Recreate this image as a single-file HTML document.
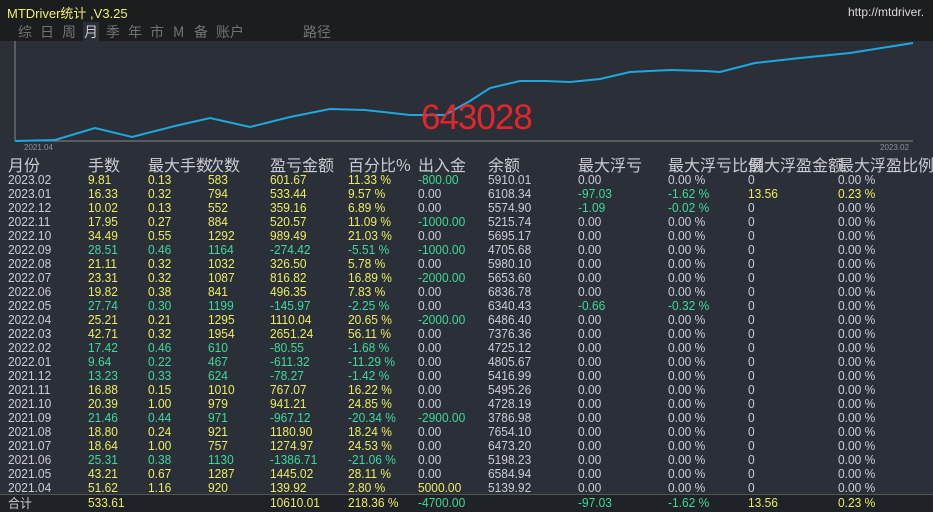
<!DOCTYPE html>
<html><head><meta charset="utf-8"><style>
*{margin:0;padding:0;box-sizing:border-box}
body{width:933px;height:512px;overflow:hidden;background:#2b3038;font-family:"Liberation Sans","Noto Sans CJK SC",sans-serif;position:relative}
#top{position:absolute;left:0;top:0;width:933px;height:41px;background:#1c1d1f}
#title{position:absolute;left:7px;top:3px;color:#f0f070;font-size:13px}
#url{position:absolute;left:848px;top:5px;color:#d8d8d8;font-size:12px}
#menu span{position:absolute;top:22px;color:#707478;font-size:14px;font-family:"Noto Sans CJK SC",sans-serif}
#chart{position:absolute;left:0;top:41px}
#red{position:absolute;left:421px;top:98px;color:#e4262a;font-size:35px;letter-spacing:-1px}
.ax{position:absolute;top:143px;font-size:8px;color:#8c9096}
table{position:absolute;left:8px;top:155px;border-collapse:collapse;font-size:13px;color:#c9cdd2;table-layout:fixed;width:925px}
td{height:14px;line-height:14px;padding:0;white-space:nowrap;overflow:visible;transform:scaleX(.92);transform-origin:left}
tr.h td{font-size:16px;height:18px;line-height:18px;font-family:"Noto Sans CJK SC",sans-serif;transform:none}
.y td:nth-child(-n+6){color:#ecec64}
.g td:nth-child(-n+6){color:#3fd99a}
.y td:first-child,.g td:first-child{color:#c9cdd2}
td.y{color:#ecec64!important}td.g{color:#3fd99a!important}td.w{color:#c9cdd2!important}
#tot{position:absolute;left:0;top:494px;width:933px;height:18px;background:#1f2226;border-top:1px solid #555}
</style></head><body>
<div id="top"></div>
<div id="title">MTDriver统计 ,V3.25</div>
<div id="url">http://mtdriver.</div>
<div id="menu"><span style="left:18px">综</span><span style="left:40px">日</span><span style="left:62px">周</span><span style="left:83px;color:#c8ccd0;background:#2b3038;padding:0 1px">月</span><span style="left:106px">季</span><span style="left:128px">年</span><span style="left:150px">市</span><span style="left:173px">M</span><span style="left:194px">备</span><span style="left:216px">账户</span><span style="left:303px">路径</span></div>
<svg id="chart" width="933" height="105">
<line x1="15" y1="0" x2="15" y2="100" stroke="#888" stroke-width="1"/>
<line x1="15" y1="100" x2="913" y2="100" stroke="#888" stroke-width="1"/>
<polyline fill="none" stroke="#1ea8e0" stroke-width="2" points="15,100 55,99 95,87 132,96 175,85 210,77 250,86 290,76 330,68 365,69 410,74 445,74 470,60 490,47 520,40 545,40 570,41 600,38 630,31 670,29 705,30 720,31 755,22 800,17 850,12 913,2"/>
</svg>
<div class="ax" style="left:24px">2021.04</div>
<div class="ax" style="left:880px">2023.02</div>
<div id="red">643028</div>
<div id="tot"></div>
<table>
<colgroup><col style="width:80px"><col style="width:60px"><col style="width:60px"><col style="width:62px"><col style="width:78px"><col style="width:70px"><col style="width:70px"><col style="width:90px"><col style="width:90px"><col style="width:80px"><col style="width:90px"><col style="width:95px"></colgroup>
<tr class="h"><td>月份</td><td>手数</td><td>最大手数</td><td>次数</td><td>盈亏金额</td><td>百分比%</td><td>出入金</td><td>余额</td><td>最大浮亏</td><td>最大浮亏比例</td><td>最大浮盈金额</td><td>最大浮盈比例</td></tr>
<tr class="y"><td>2023.02</td><td>9.81</td><td>0.13</td><td>583</td><td>601.67</td><td>11.33 %</td><td class="g">-800.00</td><td>5910.01</td><td>0.00</td><td>0.00 %</td><td>0</td><td>0.00 %</td></tr>
<tr class="y"><td>2023.01</td><td>16.33</td><td>0.32</td><td>794</td><td>533.44</td><td>9.57 %</td><td class="w">0.00</td><td>6108.34</td><td class="g">-97.03</td><td class="g">-1.62 %</td><td class="y">13.56</td><td class="y">0.23 %</td></tr>
<tr class="y"><td>2022.12</td><td>10.02</td><td>0.13</td><td>552</td><td>359.16</td><td>6.89 %</td><td class="w">0.00</td><td>5574.90</td><td class="g">-1.09</td><td class="g">-0.02 %</td><td>0</td><td>0.00 %</td></tr>
<tr class="y"><td>2022.11</td><td>17.95</td><td>0.27</td><td>884</td><td>520.57</td><td>11.09 %</td><td class="g">-1000.00</td><td>5215.74</td><td>0.00</td><td>0.00 %</td><td>0</td><td>0.00 %</td></tr>
<tr class="y"><td>2022.10</td><td>34.49</td><td>0.55</td><td>1292</td><td>989.49</td><td>21.03 %</td><td class="w">0.00</td><td>5695.17</td><td>0.00</td><td>0.00 %</td><td>0</td><td>0.00 %</td></tr>
<tr class="g"><td>2022.09</td><td>28.51</td><td>0.46</td><td>1164</td><td>-274.42</td><td>-5.51 %</td><td class="g">-1000.00</td><td>4705.68</td><td>0.00</td><td>0.00 %</td><td>0</td><td>0.00 %</td></tr>
<tr class="y"><td>2022.08</td><td>21.11</td><td>0.32</td><td>1032</td><td>326.50</td><td>5.78 %</td><td class="w">0.00</td><td>5980.10</td><td>0.00</td><td>0.00 %</td><td>0</td><td>0.00 %</td></tr>
<tr class="y"><td>2022.07</td><td>23.31</td><td>0.32</td><td>1087</td><td>816.82</td><td>16.89 %</td><td class="g">-2000.00</td><td>5653.60</td><td>0.00</td><td>0.00 %</td><td>0</td><td>0.00 %</td></tr>
<tr class="y"><td>2022.06</td><td>19.82</td><td>0.38</td><td>841</td><td>496.35</td><td>7.83 %</td><td class="w">0.00</td><td>6836.78</td><td>0.00</td><td>0.00 %</td><td>0</td><td>0.00 %</td></tr>
<tr class="g"><td>2022.05</td><td>27.74</td><td>0.30</td><td>1199</td><td>-145.97</td><td>-2.25 %</td><td class="w">0.00</td><td>6340.43</td><td class="g">-0.66</td><td class="g">-0.32 %</td><td>0</td><td>0.00 %</td></tr>
<tr class="y"><td>2022.04</td><td>25.21</td><td>0.21</td><td>1295</td><td>1110.04</td><td>20.65 %</td><td class="g">-2000.00</td><td>6486.40</td><td>0.00</td><td>0.00 %</td><td>0</td><td>0.00 %</td></tr>
<tr class="y"><td>2022.03</td><td>42.71</td><td>0.32</td><td>1954</td><td>2651.24</td><td>56.11 %</td><td class="w">0.00</td><td>7376.36</td><td>0.00</td><td>0.00 %</td><td>0</td><td>0.00 %</td></tr>
<tr class="g"><td>2022.02</td><td>17.42</td><td>0.46</td><td>610</td><td>-80.55</td><td>-1.68 %</td><td class="w">0.00</td><td>4725.12</td><td>0.00</td><td>0.00 %</td><td>0</td><td>0.00 %</td></tr>
<tr class="g"><td>2022.01</td><td>9.64</td><td>0.22</td><td>467</td><td>-611.32</td><td>-11.29 %</td><td class="w">0.00</td><td>4805.67</td><td>0.00</td><td>0.00 %</td><td>0</td><td>0.00 %</td></tr>
<tr class="g"><td>2021.12</td><td>13.23</td><td>0.33</td><td>624</td><td>-78.27</td><td>-1.42 %</td><td class="w">0.00</td><td>5416.99</td><td>0.00</td><td>0.00 %</td><td>0</td><td>0.00 %</td></tr>
<tr class="y"><td>2021.11</td><td>16.88</td><td>0.15</td><td>1010</td><td>767.07</td><td>16.22 %</td><td class="w">0.00</td><td>5495.26</td><td>0.00</td><td>0.00 %</td><td>0</td><td>0.00 %</td></tr>
<tr class="y"><td>2021.10</td><td>20.39</td><td>1.00</td><td>979</td><td>941.21</td><td>24.85 %</td><td class="w">0.00</td><td>4728.19</td><td>0.00</td><td>0.00 %</td><td>0</td><td>0.00 %</td></tr>
<tr class="g"><td>2021.09</td><td>21.46</td><td>0.44</td><td>971</td><td>-967.12</td><td>-20.34 %</td><td class="g">-2900.00</td><td>3786.98</td><td>0.00</td><td>0.00 %</td><td>0</td><td>0.00 %</td></tr>
<tr class="y"><td>2021.08</td><td>18.80</td><td>0.24</td><td>921</td><td>1180.90</td><td>18.24 %</td><td class="w">0.00</td><td>7654.10</td><td>0.00</td><td>0.00 %</td><td>0</td><td>0.00 %</td></tr>
<tr class="y"><td>2021.07</td><td>18.64</td><td>1.00</td><td>757</td><td>1274.97</td><td>24.53 %</td><td class="w">0.00</td><td>6473.20</td><td>0.00</td><td>0.00 %</td><td>0</td><td>0.00 %</td></tr>
<tr class="g"><td>2021.06</td><td>25.31</td><td>0.38</td><td>1130</td><td>-1386.71</td><td>-21.06 %</td><td class="w">0.00</td><td>5198.23</td><td>0.00</td><td>0.00 %</td><td>0</td><td>0.00 %</td></tr>
<tr class="y"><td>2021.05</td><td>43.21</td><td>0.67</td><td>1287</td><td>1445.02</td><td>28.11 %</td><td class="w">0.00</td><td>6584.94</td><td>0.00</td><td>0.00 %</td><td>0</td><td>0.00 %</td></tr>
<tr class="y"><td>2021.04</td><td>51.62</td><td>1.16</td><td>920</td><td>139.92</td><td>2.80 %</td><td class="y">5000.00</td><td>5139.92</td><td>0.00</td><td>0.00 %</td><td>0</td><td>0.00 %</td></tr>
<tr class="y"><td style="padding-top:2px">合计</td><td>533.61</td><td></td><td></td><td>10610.01</td><td>218.36 %</td><td class="g">-4700.00</td><td></td><td class="g">-97.03</td><td class="g">-1.62 %</td><td class="y">13.56</td><td class="y">0.23 %</td></tr>
</table>
</body></html>
